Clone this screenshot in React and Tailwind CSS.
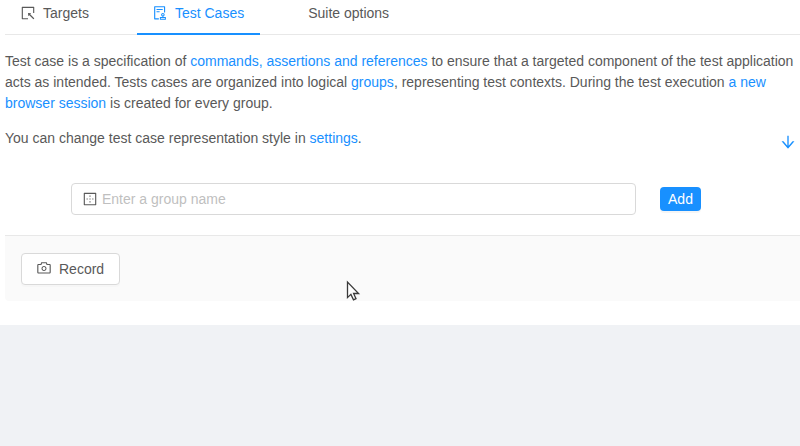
import React from "react";
import {
  AiOutlineSelect,
  AiOutlineAudit,
  AiOutlineBorderOuter,
  AiOutlineCamera,
  AiOutlineArrowDown,
} from "react-icons/ai";

function Tab({ icon: Icon, label, active }) {
  return (
    <div
      className={
        active
          ? "flex h-[35px] border-b-2 border-[#1890ff] px-4 pt-[3px] text-[#1890ff]"
          : "flex h-[35px] px-4 pt-[3px]"
      }
    >
      {Icon && <Icon className="mt-[2px] mr-[7px] -ml-px size-4" />}
      <span>{label}</span>
    </div>
  );
}

function Link({ children }) {
  return <a className="text-[#1890ff]">{children}</a>;
}

function Cursor() {
  return (
    <svg className="absolute top-[280px] left-[346px]" width="15" height="22" viewBox="0 0 15 22">
      <path
        d="M1.5 2v15.6l3.4-3.2 2.6 5.4 2.5-1.2-2.4-5.1h5z"
        fill="#fff"
        stroke="#3a3a3a"
        strokeWidth="1.3"
      />
    </svg>
  );
}

export default function App() {
  return (
    <div className="relative h-[446px] w-[800px] overflow-hidden bg-[#f0f2f5] font-['Liberation_Sans',Arial,sans-serif] text-sm leading-[21px] text-[#595959]">
      <main className="h-[325px] bg-white pl-[5px]">
        <nav className="flex h-[35px] gap-8 shadow-[inset_0_-1px_0_#e8e8e8]">
          <Tab icon={AiOutlineSelect} label="Targets" />
          <Tab icon={AiOutlineAudit} label="Test Cases" active />
          <Tab label="Suite options" />
        </nav>

        <section className="h-[200px] pt-4">
          <p className="mb-3.5">
            Test case is a specification of <Link>commands, assertions and references</Link> to
            ensure that a targeted component of the test application acts as intended. Tests cases
            are organized into logical <Link>groups</Link>, representing test contexts. During the
            test execution <Link>a new browser session</Link> is created for every group.
          </p>
          <div className="flex h-[21px] justify-between pr-[3px]">
            <p>
              You can change test case representation style in <Link>settings</Link>.
            </p>
            <AiOutlineArrowDown className="mt-[5px] size-[18px] text-[#1890ff]" />
          </div>
          <div className="mt-[34px] flex items-center gap-6 pl-[66px]">
            <label className="flex h-8 w-[565px] items-center gap-1 rounded border border-[#d9d9d9] pl-2.5">
              <AiOutlineBorderOuter className="size-4 shrink-0" />
              <input
                className="w-full bg-transparent outline-none placeholder:text-[#bfbfbf]"
                placeholder="Enter a group name"
              />
            </label>
            <button className="h-6 w-[41px] rounded bg-[#1890ff] text-white shadow-[0_2px_0_rgba(0,0,0,0.04)]">
              Add
            </button>
          </div>
        </section>

        <footer className="h-[66px] rounded-bl border-t border-[#e8e8e8] bg-[#fafafa] pt-[17px] pl-4">
          <button className="flex h-8 w-[99px] items-center gap-[7px] rounded border border-[#d9d9d9] bg-white pl-3.5 shadow-[0_2px_0_rgba(0,0,0,0.015)]">
            <AiOutlineCamera className="mb-0.5 size-4" />
            <span>Record</span>
          </button>
        </footer>
      </main>
      <Cursor />
    </div>
  );
}
